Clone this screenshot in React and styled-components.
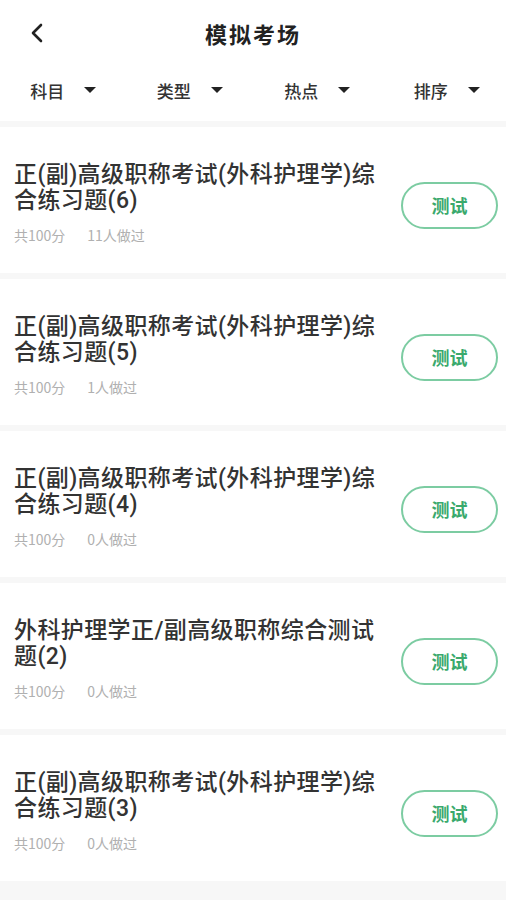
import React from "react";
import styled, { createGlobalStyle } from "styled-components";

const Global = createGlobalStyle`
  html, body { margin: 0; padding: 0; background: #ffffff; }
  body { font-family: "Noto Sans CJK SC", "Noto Sans", sans-serif; }
  * { box-sizing: border-box; }
`;

const Page = styled.div`
  width: 506px;
  min-height: 900px;
  background: #f7f7f7;
  display: flex;
  flex-direction: column;
`;

const Header = styled.div`
  height: 66px;
  background: #fff;
  display: grid;
  grid-template-columns: 80px 1fr 80px;
  align-items: center;
`;

const BackBtn = styled.div`
  display: flex;
  align-items: center;
  padding-left: 30px;
`;

const Title = styled.div`
  text-align: center;
  font-size: 22px;
  font-weight: 700;
  color: #222;
  letter-spacing: 2px;
`;

const Filters = styled.div`
  height: 55px;
  background: #fff;
  display: grid;
  grid-template-columns: repeat(4, 1fr);
  align-items: center;
  padding: 0 0 7px 0;
`;

const FilterItem = styled.div`
  display: flex;
  align-items: center;
  justify-content: center;
  gap: 20px;
  font-size: 17px;
  font-weight: 500;
  color: #333;
  padding-left: ${(p) => p.$shift || 0}px;
`;

const Caret = styled.span`
  width: 0;
  height: 0;
  border-left: 6px solid transparent;
  border-right: 6px solid transparent;
  border-top: 6px solid #222;
`;

const List = styled.div`
  margin-top: 6px;
  display: flex;
  flex-direction: column;
  gap: 6px;
`;

const Item = styled.div`
  background: #fff;
  height: 146px;
  display: flex;
  align-items: flex-start;
  padding: 35px 8px 28px 14px;
`;

const Info = styled.div`
  width: 382px;
  flex: none;
`;

const ItemTitle = styled.div`
  font-family: Roboto, "Noto Sans CJK SC", sans-serif;
  font-size: 23px;
  line-height: 26px;
  font-weight: 500;
  letter-spacing: 0.4px;
  color: #333;
`;

const Meta = styled.div`
  margin-top: 12px;
  display: flex;
  gap: 22px;
  font-size: 14px;
  line-height: 18px;
  color: #b0b0b0;
`;

const TestBtn = styled.div`
  margin-left: auto;
  align-self: center;
  margin-top: 3px;
  width: 97px;
  height: 47px;
  border-radius: 24px;
  border: 2px solid #7ccca2;
  color: #3aa96c;
  font-size: 18px;
  font-weight: 700;
  display: flex;
  align-items: center;
  justify-content: center;
`;

const items = [
  { title: "正(副)高级职称考试(外科护理学)综合练习题(6)", done: 11 },
  { title: "正(副)高级职称考试(外科护理学)综合练习题(5)", done: 1 },
  { title: "正(副)高级职称考试(外科护理学)综合练习题(4)", done: 0 },
  { title: "外科护理学正/副高级职称综合测试题(2)", done: 0 },
  { title: "正(副)高级职称考试(外科护理学)综合练习题(3)", done: 0 },
];

const filters = [
  { label: "科目", shift: 0 },
  { label: "类型", shift: 0 },
  { label: "热点", shift: 2 },
  { label: "排序", shift: 8 },
];

export default function App() {
  return (
    <Page>
      <Global />
      <Header>
        <BackBtn>
          <svg width="14" height="20" viewBox="0 0 14 20">
            <path d="M11 2 L3 10 L11 18" fill="none" stroke="#222" strokeWidth="2.6" strokeLinecap="round" strokeLinejoin="round" />
          </svg>
        </BackBtn>
        <Title>模拟考场</Title>
        <div />
      </Header>
      <Filters>
        {filters.map((f) => (
          <FilterItem key={f.label} $shift={f.shift}>
            {f.label}
            <Caret />
          </FilterItem>
        ))}
      </Filters>
      <List>
        {items.map((it, i) => (
          <Item key={i}>
            <Info>
              <ItemTitle>{it.title}</ItemTitle>
              <Meta>
                <span>共100分</span>
                <span>{it.done}人做过</span>
              </Meta>
            </Info>
            <TestBtn>测试</TestBtn>
          </Item>
        ))}
      </List>
    </Page>
  );
}
